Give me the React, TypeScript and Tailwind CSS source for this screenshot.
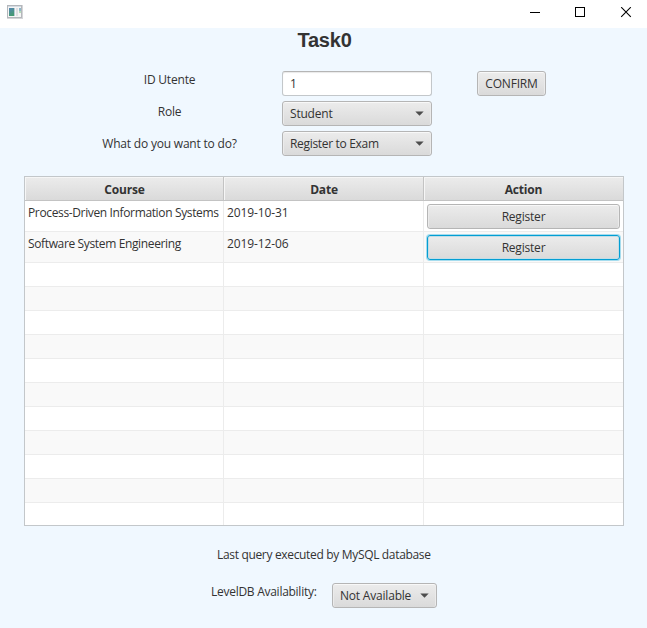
import type { ReactNode } from "react";

const face =
  "pt-px border border-[#b5b5b5] rounded-[3px] bg-gradient-to-b from-[#ececec] to-[#dadada] shadow-[inset_0_1px_0_#f8f8f8,inset_1px_0_0_#ebebeb,inset_-1px_0_0_#ebebeb]";

function Combo({ children, className }: { children: ReactNode; className: string }) {
  return (
    <button className={`flex h-[25px] items-center justify-between pl-[7px] pr-[7px] ${face} ${className}`}>
      <span>{children}</span>
      <svg className="-mt-px" width="9" height="5" viewBox="0 0 9 5">
        <path d="M0.3 0.5H8.7L4.5 4.7Z" fill="#4d4d4d" />
      </svg>
    </button>
  );
}

const rows = [
  { course: "Process-Driven Information Systems", date: "2019-10-31", focused: false },
  { course: "Software System Engineering", date: "2019-12-06", focused: true },
];

const focusRing =
  "pt-px border border-[#039ed3] rounded-[3px] bg-gradient-to-b from-[#ececec] to-[#dadada] shadow-[0_0_0_1px_#a5dcee,inset_0_0_0_1px_#c3dde6]";

const headCell =
  "flex items-center justify-center border-b border-[#c3c3c3] bg-gradient-to-b from-[#ececec] to-[#dadada] pt-[3px] font-bold shadow-[inset_1px_1px_0_#f6f6f6]";

export default function App() {
  return (
    <div className="h-[628px] w-[647px] overflow-hidden bg-[#f0f8ff] font-['Open_Sans','Noto_Sans',sans-serif] text-[12px] leading-4 tracking-[-0.2px] text-[#333333]">
      <header className="flex h-7 items-start justify-between bg-white">
        <svg className="ml-[7px] mt-[5px]" width="16" height="14" viewBox="0 0 16 14" shapeRendering="crispEdges">
          <defs>
            <linearGradient id="pane" x1="0" y1="0" x2="0.4" y2="1">
              <stop offset="0" stopColor="#5585b5" />
              <stop offset="1" stopColor="#459a72" />
            </linearGradient>
          </defs>
          <path d="M0 0H16V14H0Z" fill="#d5d5d8" />
          <path d="M0 0H15V13H0Z" fill="#b4b7bb" />
          <path d="M1 1H14V2H1Z" fill="#d4dbe3" />
          <path d="M1 2H14V12H1Z" fill="#f5f5f5" />
          <path d="M2 3H7V11H2Z" fill="url(#pane)" />
          <path d="M7 3H8V11H7Z" fill="#b9c8d2" />
          <path d="M9 3H11V11H9Z" fill="#dfdfe2" />
          <path d="M12 3H14V6H12Z" fill="#8fb8ca" />
          <path d="M12 6H14V8H12Z" fill="#b7dcbb" />
        </svg>
        <svg className="mr-[15px] mt-[7px]" width="102" height="11" viewBox="0 0 102 11" fill="none" stroke="#000">
          <path d="M0 5.5H10" shapeRendering="crispEdges" />
          <path d="M45.5 0.5H54.5V9.5H45.5Z" shapeRendering="crispEdges" />
          <path d="M91.2 0.2L100.8 9.8M100.8 0.2L91.2 9.8" strokeWidth="1.1" />
        </svg>
      </header>

      <h1 className="h-[43px] pl-0.5 text-center font-['Liberation_Sans',Arial,sans-serif] text-[20px] font-bold leading-[24px]">
        Task0
      </h1>

      <section className="flex h-[105px]">
        <div className="ml-[92px] w-[155px] text-center">
          <p className="mt-px h-8">ID Utente</p>
          <p className="h-8">Role</p>
          <p className="h-8">What do you want to do?</p>
        </div>
        <div className="ml-[35px] flex w-[150px] flex-col gap-[5px]">
          <input
            className="h-[25px] rounded-[3px] border border-[#c3c7ca] border-t-[#b5b5b5] bg-white px-[7px] text-[#333333] shadow-[inset_0_1px_1px_#e9e9e9] outline-none"
            defaultValue="1"
          />
          <Combo className="w-[150px]">Student</Combo>
          <Combo className="w-[150px] tracking-[-0.32px]">Register to Exam</Combo>
        </div>
        <button className={`ml-[45px] h-[25px] w-[69px] ${face}`}>CONFIRM</button>
      </section>

      <section className="ml-6 h-[350px] w-[600px] overflow-hidden border border-[#c3c7ca] bg-white">
        <div className="grid h-6 grid-cols-[199px_200px_199px]">
          <div className={`${headCell} border-r pl-px`}>Course</div>
          <div className={`${headCell} border-r pl-px`}>Date</div>
          <div className={headCell}>Action</div>
        </div>
        {rows.map((row) => (
          <div
            key={row.date}
            className="grid h-[31px] grid-cols-[199px_200px_199px] border-b border-[#ececec] even:bg-white odd:bg-[#f9f9f9]"
          >
            <div className="whitespace-nowrap border-r border-[#ececec] pl-[3px] pt-1 tracking-[-0.36px]">
              {row.course}
            </div>
            <div className="border-r border-[#ececec] pl-[3px] pt-1 tracking-[-0.1px]">{row.date}</div>
            <div className="px-[3px] pt-[3px]">
              <button className={`h-[25px] w-[193px] ${row.focused ? focusRing : face}`}>Register</button>
            </div>
          </div>
        ))}
        {Array.from({ length: 11 }, (_, i) => (
          <div key={i} className="grid h-6 grid-cols-[199px_200px_199px] border-b border-[#ececec] even:bg-white odd:bg-[#f9f9f9]">
            <div className="border-r border-[#ececec]" />
            <div className="border-r border-[#ececec]" />
            <div />
          </div>
        ))}
      </section>

      <p className="mt-[21px] pl-[217px] tracking-[-0.33px]">Last query executed by MySQL database</p>
      <div className="mt-5 flex pl-[211px]">
        <span className="mt-px w-[121px] whitespace-nowrap tracking-[-0.27px]">LevelDB Availability:</span>
        <Combo className="w-[105px]">Not Available</Combo>
      </div>
    </div>
  );
}
